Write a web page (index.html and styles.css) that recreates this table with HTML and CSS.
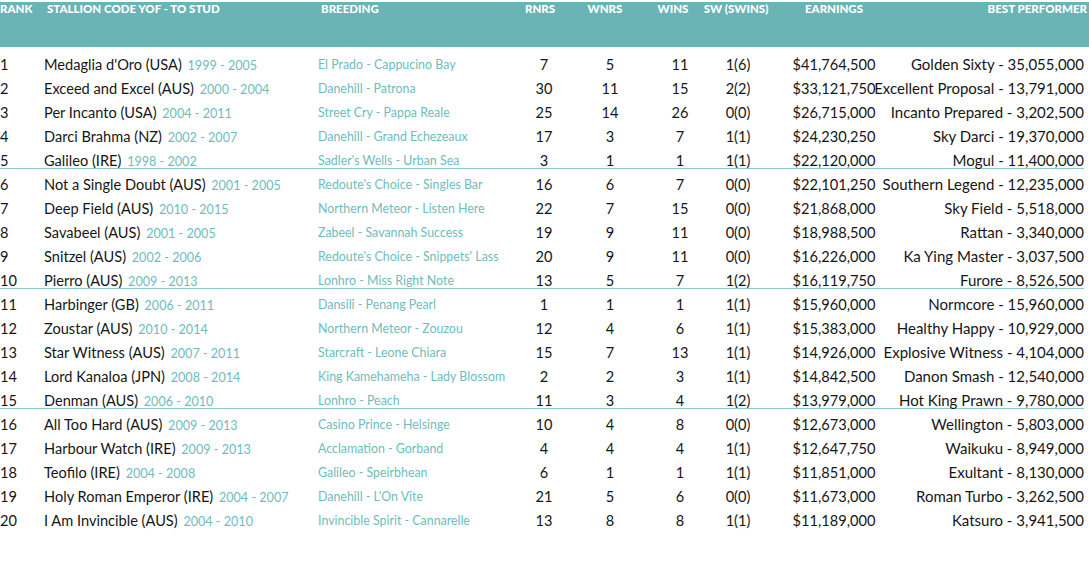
FILE: index.html
```html
<!DOCTYPE html>
<html lang="en">
<head>
<meta charset="utf-8">
<title>Stallion rankings</title>
<link rel="stylesheet" href="styles.css">
</head>
<body>
<div class="table">
  <div class="head">
    <div class="h h-rank">RANK</div>
    <div class="h h-name">STALLION CODE YOF - TO STUD</div>
    <div class="h h-breed">BREEDING</div>
    <div class="h h-num h-rnrs">RNRS</div>
    <div class="h h-num h-wnrs">WNRS</div>
    <div class="h h-num h-wins">WINS</div>
    <div class="h h-num h-sw">SW (SWINS)</div>
    <div class="h h-num h-earn">EARNINGS</div>
    <div class="h h-best">BEST PERFORMER</div>
  </div>
  <div class="body">
    <div class="row"><div class="c-rank">1</div><div class="c-name">Medaglia d'Oro (USA) <span class="yr">1999 - 2005</span></div><div class="c-breed">El Prado - Cappucino Bay</div><div class="c-num">7</div><div class="c-num">5</div><div class="c-num">11</div><div class="c-num">1(6)</div><div class="c-num">$41,764,500</div><div class="c-best">Golden Sixty - 35,055,000</div></div>
    <div class="row"><div class="c-rank">2</div><div class="c-name">Exceed and Excel (AUS) <span class="yr">2000 - 2004</span></div><div class="c-breed">Danehill - Patrona</div><div class="c-num">30</div><div class="c-num">11</div><div class="c-num">15</div><div class="c-num">2(2)</div><div class="c-num">$33,121,750</div><div class="c-best">Excellent Proposal - 13,791,000</div></div>
    <div class="row"><div class="c-rank">3</div><div class="c-name">Per Incanto (USA) <span class="yr">2004 - 2011</span></div><div class="c-breed">Street Cry - Pappa Reale</div><div class="c-num">25</div><div class="c-num">14</div><div class="c-num">26</div><div class="c-num">0(0)</div><div class="c-num">$26,715,000</div><div class="c-best">Incanto Prepared - 3,202,500</div></div>
    <div class="row"><div class="c-rank">4</div><div class="c-name">Darci Brahma (NZ) <span class="yr">2002 - 2007</span></div><div class="c-breed">Danehill - Grand Echezeaux</div><div class="c-num">17</div><div class="c-num">3</div><div class="c-num">7</div><div class="c-num">1(1)</div><div class="c-num">$24,230,250</div><div class="c-best">Sky Darci - 19,370,000</div></div>
    <div class="row sep"><div class="c-rank">5</div><div class="c-name">Galileo (IRE) <span class="yr">1998 - 2002</span></div><div class="c-breed">Sadler's Wells - Urban Sea</div><div class="c-num">3</div><div class="c-num">1</div><div class="c-num">1</div><div class="c-num">1(1)</div><div class="c-num">$22,120,000</div><div class="c-best">Mogul - 11,400,000</div></div>
    <div class="row"><div class="c-rank">6</div><div class="c-name">Not a Single Doubt (AUS) <span class="yr">2001 - 2005</span></div><div class="c-breed">Redoute's Choice - Singles Bar</div><div class="c-num">16</div><div class="c-num">6</div><div class="c-num">7</div><div class="c-num">0(0)</div><div class="c-num">$22,101,250</div><div class="c-best">Southern Legend - 12,235,000</div></div>
    <div class="row"><div class="c-rank">7</div><div class="c-name">Deep Field (AUS) <span class="yr">2010 - 2015</span></div><div class="c-breed">Northern Meteor - Listen Here</div><div class="c-num">22</div><div class="c-num">7</div><div class="c-num">15</div><div class="c-num">0(0)</div><div class="c-num">$21,868,000</div><div class="c-best">Sky Field - 5,518,000</div></div>
    <div class="row"><div class="c-rank">8</div><div class="c-name">Savabeel (AUS) <span class="yr">2001 - 2005</span></div><div class="c-breed">Zabeel - Savannah Success</div><div class="c-num">19</div><div class="c-num">9</div><div class="c-num">11</div><div class="c-num">0(0)</div><div class="c-num">$18,988,500</div><div class="c-best">Rattan - 3,340,000</div></div>
    <div class="row"><div class="c-rank">9</div><div class="c-name">Snitzel (AUS) <span class="yr">2002 - 2006</span></div><div class="c-breed">Redoute's Choice - Snippets' Lass</div><div class="c-num">20</div><div class="c-num">9</div><div class="c-num">11</div><div class="c-num">0(0)</div><div class="c-num">$16,226,000</div><div class="c-best">Ka Ying Master - 3,037,500</div></div>
    <div class="row sep"><div class="c-rank">10</div><div class="c-name">Pierro (AUS) <span class="yr">2009 - 2013</span></div><div class="c-breed">Lonhro - Miss Right Note</div><div class="c-num">13</div><div class="c-num">5</div><div class="c-num">7</div><div class="c-num">1(2)</div><div class="c-num">$16,119,750</div><div class="c-best">Furore - 8,526,500</div></div>
    <div class="row"><div class="c-rank">11</div><div class="c-name">Harbinger (GB) <span class="yr">2006 - 2011</span></div><div class="c-breed">Dansili - Penang Pearl</div><div class="c-num">1</div><div class="c-num">1</div><div class="c-num">1</div><div class="c-num">1(1)</div><div class="c-num">$15,960,000</div><div class="c-best">Normcore - 15,960,000</div></div>
    <div class="row"><div class="c-rank">12</div><div class="c-name">Zoustar (AUS) <span class="yr">2010 - 2014</span></div><div class="c-breed">Northern Meteor - Zouzou</div><div class="c-num">12</div><div class="c-num">4</div><div class="c-num">6</div><div class="c-num">1(1)</div><div class="c-num">$15,383,000</div><div class="c-best">Healthy Happy - 10,929,000</div></div>
    <div class="row"><div class="c-rank">13</div><div class="c-name">Star Witness (AUS) <span class="yr">2007 - 2011</span></div><div class="c-breed">Starcraft - Leone Chiara</div><div class="c-num">15</div><div class="c-num">7</div><div class="c-num">13</div><div class="c-num">1(1)</div><div class="c-num">$14,926,000</div><div class="c-best">Explosive Witness - 4,104,000</div></div>
    <div class="row"><div class="c-rank">14</div><div class="c-name">Lord Kanaloa (JPN) <span class="yr">2008 - 2014</span></div><div class="c-breed">King Kamehameha - Lady Blossom</div><div class="c-num">2</div><div class="c-num">2</div><div class="c-num">3</div><div class="c-num">1(1)</div><div class="c-num">$14,842,500</div><div class="c-best">Danon Smash - 12,540,000</div></div>
    <div class="row sep"><div class="c-rank">15</div><div class="c-name">Denman (AUS) <span class="yr">2006 - 2010</span></div><div class="c-breed">Lonhro - Peach</div><div class="c-num">11</div><div class="c-num">3</div><div class="c-num">4</div><div class="c-num">1(2)</div><div class="c-num">$13,979,000</div><div class="c-best">Hot King Prawn - 9,780,000</div></div>
    <div class="row"><div class="c-rank">16</div><div class="c-name">All Too Hard (AUS) <span class="yr">2009 - 2013</span></div><div class="c-breed">Casino Prince - Helsinge</div><div class="c-num">10</div><div class="c-num">4</div><div class="c-num">8</div><div class="c-num">0(0)</div><div class="c-num">$12,673,000</div><div class="c-best">Wellington - 5,803,000</div></div>
    <div class="row"><div class="c-rank">17</div><div class="c-name">Harbour Watch (IRE) <span class="yr">2009 - 2013</span></div><div class="c-breed">Acclamation - Gorband</div><div class="c-num">4</div><div class="c-num">4</div><div class="c-num">4</div><div class="c-num">1(1)</div><div class="c-num">$12,647,750</div><div class="c-best">Waikuku - 8,949,000</div></div>
    <div class="row"><div class="c-rank">18</div><div class="c-name">Teofilo (IRE) <span class="yr">2004 - 2008</span></div><div class="c-breed">Galileo - Speirbhean</div><div class="c-num">6</div><div class="c-num">1</div><div class="c-num">1</div><div class="c-num">1(1)</div><div class="c-num">$11,851,000</div><div class="c-best">Exultant - 8,130,000</div></div>
    <div class="row"><div class="c-rank">19</div><div class="c-name">Holy Roman Emperor (IRE) <span class="yr">2004 - 2007</span></div><div class="c-breed">Danehill - L'On Vite</div><div class="c-num">21</div><div class="c-num">5</div><div class="c-num">6</div><div class="c-num">0(0)</div><div class="c-num">$11,673,000</div><div class="c-best">Roman Turbo - 3,262,500</div></div>
    <div class="row"><div class="c-rank">20</div><div class="c-name">I Am Invincible (AUS) <span class="yr">2004 - 2010</span></div><div class="c-breed">Invincible Spirit - Cannarelle</div><div class="c-num">13</div><div class="c-num">8</div><div class="c-num">8</div><div class="c-num">1(1)</div><div class="c-num">$11,189,000</div><div class="c-best">Katsuro - 3,941,500</div></div>
  </div>
</div>
</body>
</html>
```

FILE: styles.css
```css
html, body {
  margin: 0;
  padding: 0;
  background: #ffffff;
}
body {
  font-family: "Lato", "Liberation Sans", sans-serif;
  color: #161616;
  width: 1089px;
  height: 572px;
  overflow: hidden;
}
.table {
  padding-top: 2px;
}
.head,
.row {
  display: grid;
  grid-template-columns: 44px 274px 200px 52px 80px 60px 56px 136px 182px;
  width: 1084px;
}
.head {
  background: #6bb4b5;
  height: 45px;
  align-items: start;
  width: 1089px;
  grid-template-columns: 44px 274px 200px 52px 80px 60px 56px 136px 187px;
}
.h {
  color: #ffffff;
  font-weight: 900;
  font-size: 11.5px;
  line-height: 14px;
  padding-top: 0;
  white-space: nowrap;
}
.h-name { padding-left: 3px; }
.h-breed { padding-left: 3px; }
.h-num {
  display: flex;
  justify-content: center;
}
.h-rnrs { padding-right: 8px; }
.h-wnrs { padding-right: 10px; }
.h-wins { padding-right: 14px; }
.h-sw { padding-right: 4px; }
.h-best {
  display: flex;
  justify-content: flex-end;
  padding-right: 2px;
}
.body {
  padding-top: 5px;
}
.row {
  height: 24px;
  align-items: center;
  font-size: 14.6px;
  box-sizing: border-box;
}
.row.sep {
  height: 21px;
  padding-top: 3px;
  border-bottom: 1px solid #8ccaca;
  margin-bottom: 3px;
}
.c-rank,
.c-name,
.c-breed {
  white-space: nowrap;
}
.c-breed {
  color: #6fbcbc;
  font-size: 12.4px;
}
.yr {
  color: #6fbcbc;
  font-size: 12.6px;
  margin-left: 2px;
}
.c-num {
  display: flex;
  justify-content: center;
  white-space: nowrap;
}
.c-best {
  display: flex;
  justify-content: flex-end;
  white-space: nowrap;
  font-size: 15px;
}
```
